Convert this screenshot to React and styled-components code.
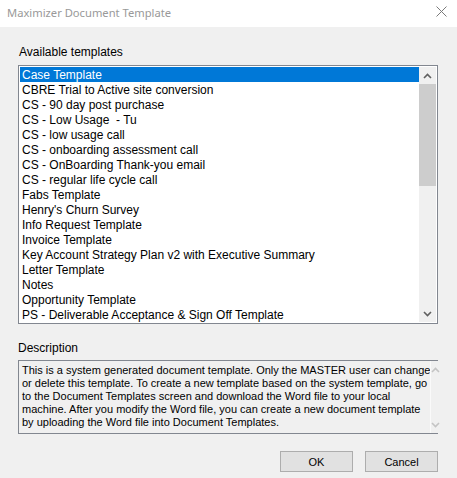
import React from "react";
import styled, { createGlobalStyle } from "styled-components";

const GlobalStyle = createGlobalStyle`
  html, body {
    margin: 0;
    padding: 0;
    background: #f0f0f0;
  }
  * {
    box-sizing: border-box;
  }
`;

const templates = [
  "Case Template",
  "CBRE Trial to Active site conversion",
  "CS - 90 day post purchase",
  "CS - Low Usage  - Tu",
  "CS - low usage call",
  "CS - onboarding assessment call",
  "CS - OnBoarding Thank-you email",
  "CS - regular life cycle call",
  "Fabs Template",
  "Henry's Churn Survey",
  "Info Request Template",
  "Invoice Template",
  "Key Account Strategy Plan v2 with Executive Summary",
  "Letter Template",
  "Notes",
  "Opportunity Template",
  "PS - Deliverable Acceptance & Sign Off Template",
];

const descriptionLines = [
  "This is a system generated document template. Only the MASTER user can change",
  "or delete this template. To create a new template based on the system template, go",
  "to the Document Templates screen and download the Word file to your local",
  "machine. After you modify the Word file, you can create a new document template",
  "by uploading the Word file into Document Templates.",
];

const Chevron = ({ dir, color }) => (
  <svg width="9" height="6" viewBox="0 0 9 6">
    <polyline
      points={dir === "up" ? "1,5 4.5,1.5 8,5" : "1,1 4.5,4.5 8,1"}
      fill="none"
      stroke={color}
      strokeWidth="1.6"
    />
  </svg>
);

export default function App() {
  return (
    <>
      <GlobalStyle />
      <Window>
        <TitleBar>
          <Title>Maximizer Document Template</Title>
          <CloseButton>
            <svg width="11" height="11" viewBox="0 0 11 11">
              <path d="M0.5 0.5 L10.5 10.5 M10.5 0.5 L0.5 10.5" stroke="#7a7a7a" strokeWidth="1" />
            </svg>
          </CloseButton>
        </TitleBar>
        <Body>
          <Label>Available templates</Label>
          <ListBox>
            <Rows>
              {templates.map((t, i) => (
                <Row key={t} selected={i === 0}>
                  {t}
                </Row>
              ))}
            </Rows>
            <ScrollBar>
              <ArrowButton>
                <Chevron dir="up" color="#606060" />
              </ArrowButton>
              <Track>
                <Thumb />
              </Track>
              <ArrowButton>
                <Chevron dir="down" color="#606060" />
              </ArrowButton>
            </ScrollBar>
          </ListBox>
          <Label $top={18}>Description</Label>
          <DescBox>
            <DescText>
              {descriptionLines.map((l) => (
                <DescLine key={l}>{l}</DescLine>
              ))}
            </DescText>
            <ScrollBar $disabled>
              <ArrowButton>
                <Chevron dir="up" color="#c4c4c4" />
              </ArrowButton>
              <Track />
              <ArrowButton>
                <Chevron dir="down" color="#c4c4c4" />
              </ArrowButton>
            </ScrollBar>
          </DescBox>
          <ButtonRow>
            <Button>OK</Button>
            <Button>Cancel</Button>
          </ButtonRow>
        </Body>
      </Window>
    </>
  );
}

const Window = styled.div`
  width: 457px;
  height: 478px;
  display: flex;
  flex-direction: column;
  background: #f0f0f0;
  font-family: "Liberation Sans", Arial, sans-serif;
  font-size: 11px;
  color: #000;
  overflow: hidden;
`;

const TitleBar = styled.div`
  height: 27px;
  background: #fff;
  display: flex;
  align-items: center;
  justify-content: space-between;
  padding-left: 7px;
`;

const Title = styled.div`
  font-family: "Noto Sans", "Open Sans", sans-serif;
  font-size: 11.2px;
  color: #999;
  margin-top: -3px;
`;

const CloseButton = styled.div`
  width: 46px;
  height: 27px;
  display: flex;
  align-items: center;
  justify-content: flex-end;
  padding-right: 10px;
  margin-top: -5px;
`;

const Body = styled.div`
  flex: 1;
  display: flex;
  flex-direction: column;
  padding: 19px 19px 0 18px;
`;

const Label = styled.div`
  height: 13px;
  line-height: 13px;
  font-size: 12px;
  margin-top: ${(p) => (p.$top ? `${p.$top}px` : "0")};
  padding-left: ${(p) => (p.$top ? "0" : "1px")};
`;

const ListBox = styled.div`
  margin-top: 6px;
  height: 259px;
  border: 1px solid #828790;
  background: #fff;
  padding: 1px;
  display: flex;
`;

const Rows = styled.div`
  flex: 1;
  display: flex;
  flex-direction: column;
  overflow: hidden;
`;

const Row = styled.div`
  height: 15px;
  line-height: 16px;
  font-size: 12px;
  padding-left: 2px;
  white-space: pre;
  background: ${(p) => (p.selected ? "#0078d7" : "transparent")};
  color: ${(p) => (p.selected ? "#fff" : "#000")};
`;

const ScrollBar = styled.div`
  width: 17px;
  display: flex;
  flex-direction: column;
  background: #f0f0f0;
  border-left: ${(p) => (p.$disabled ? "1px solid #fafafa" : "none")};
`;

const ArrowButton = styled.div`
  height: 17px;
  display: flex;
  align-items: center;
  justify-content: center;
`;

const Track = styled.div`
  flex: 1;
`;

const Thumb = styled.div`
  height: 102px;
  background: #cdcdcd;
`;

const DescBox = styled.div`
  margin-top: 5px;
  height: 74px;
  border: 1px solid #828790;
  background: #f0f0f0;
  display: flex;
`;

const DescText = styled.div`
  flex: 1;
  padding: 3px 0 0 3px;
`;

const DescLine = styled.div`
  height: 13px;
  line-height: 13px;
  white-space: nowrap;
`;

const ButtonRow = styled.div`
  margin-top: 17px;
  display: flex;
  justify-content: flex-end;
  gap: 12px;
`;

const Button = styled.div`
  width: 73px;
  height: 21px;
  border: 1px solid #adadad;
  background: #e1e1e1;
  display: flex;
  align-items: center;
  justify-content: center;
  font-size: 11px;
`;
